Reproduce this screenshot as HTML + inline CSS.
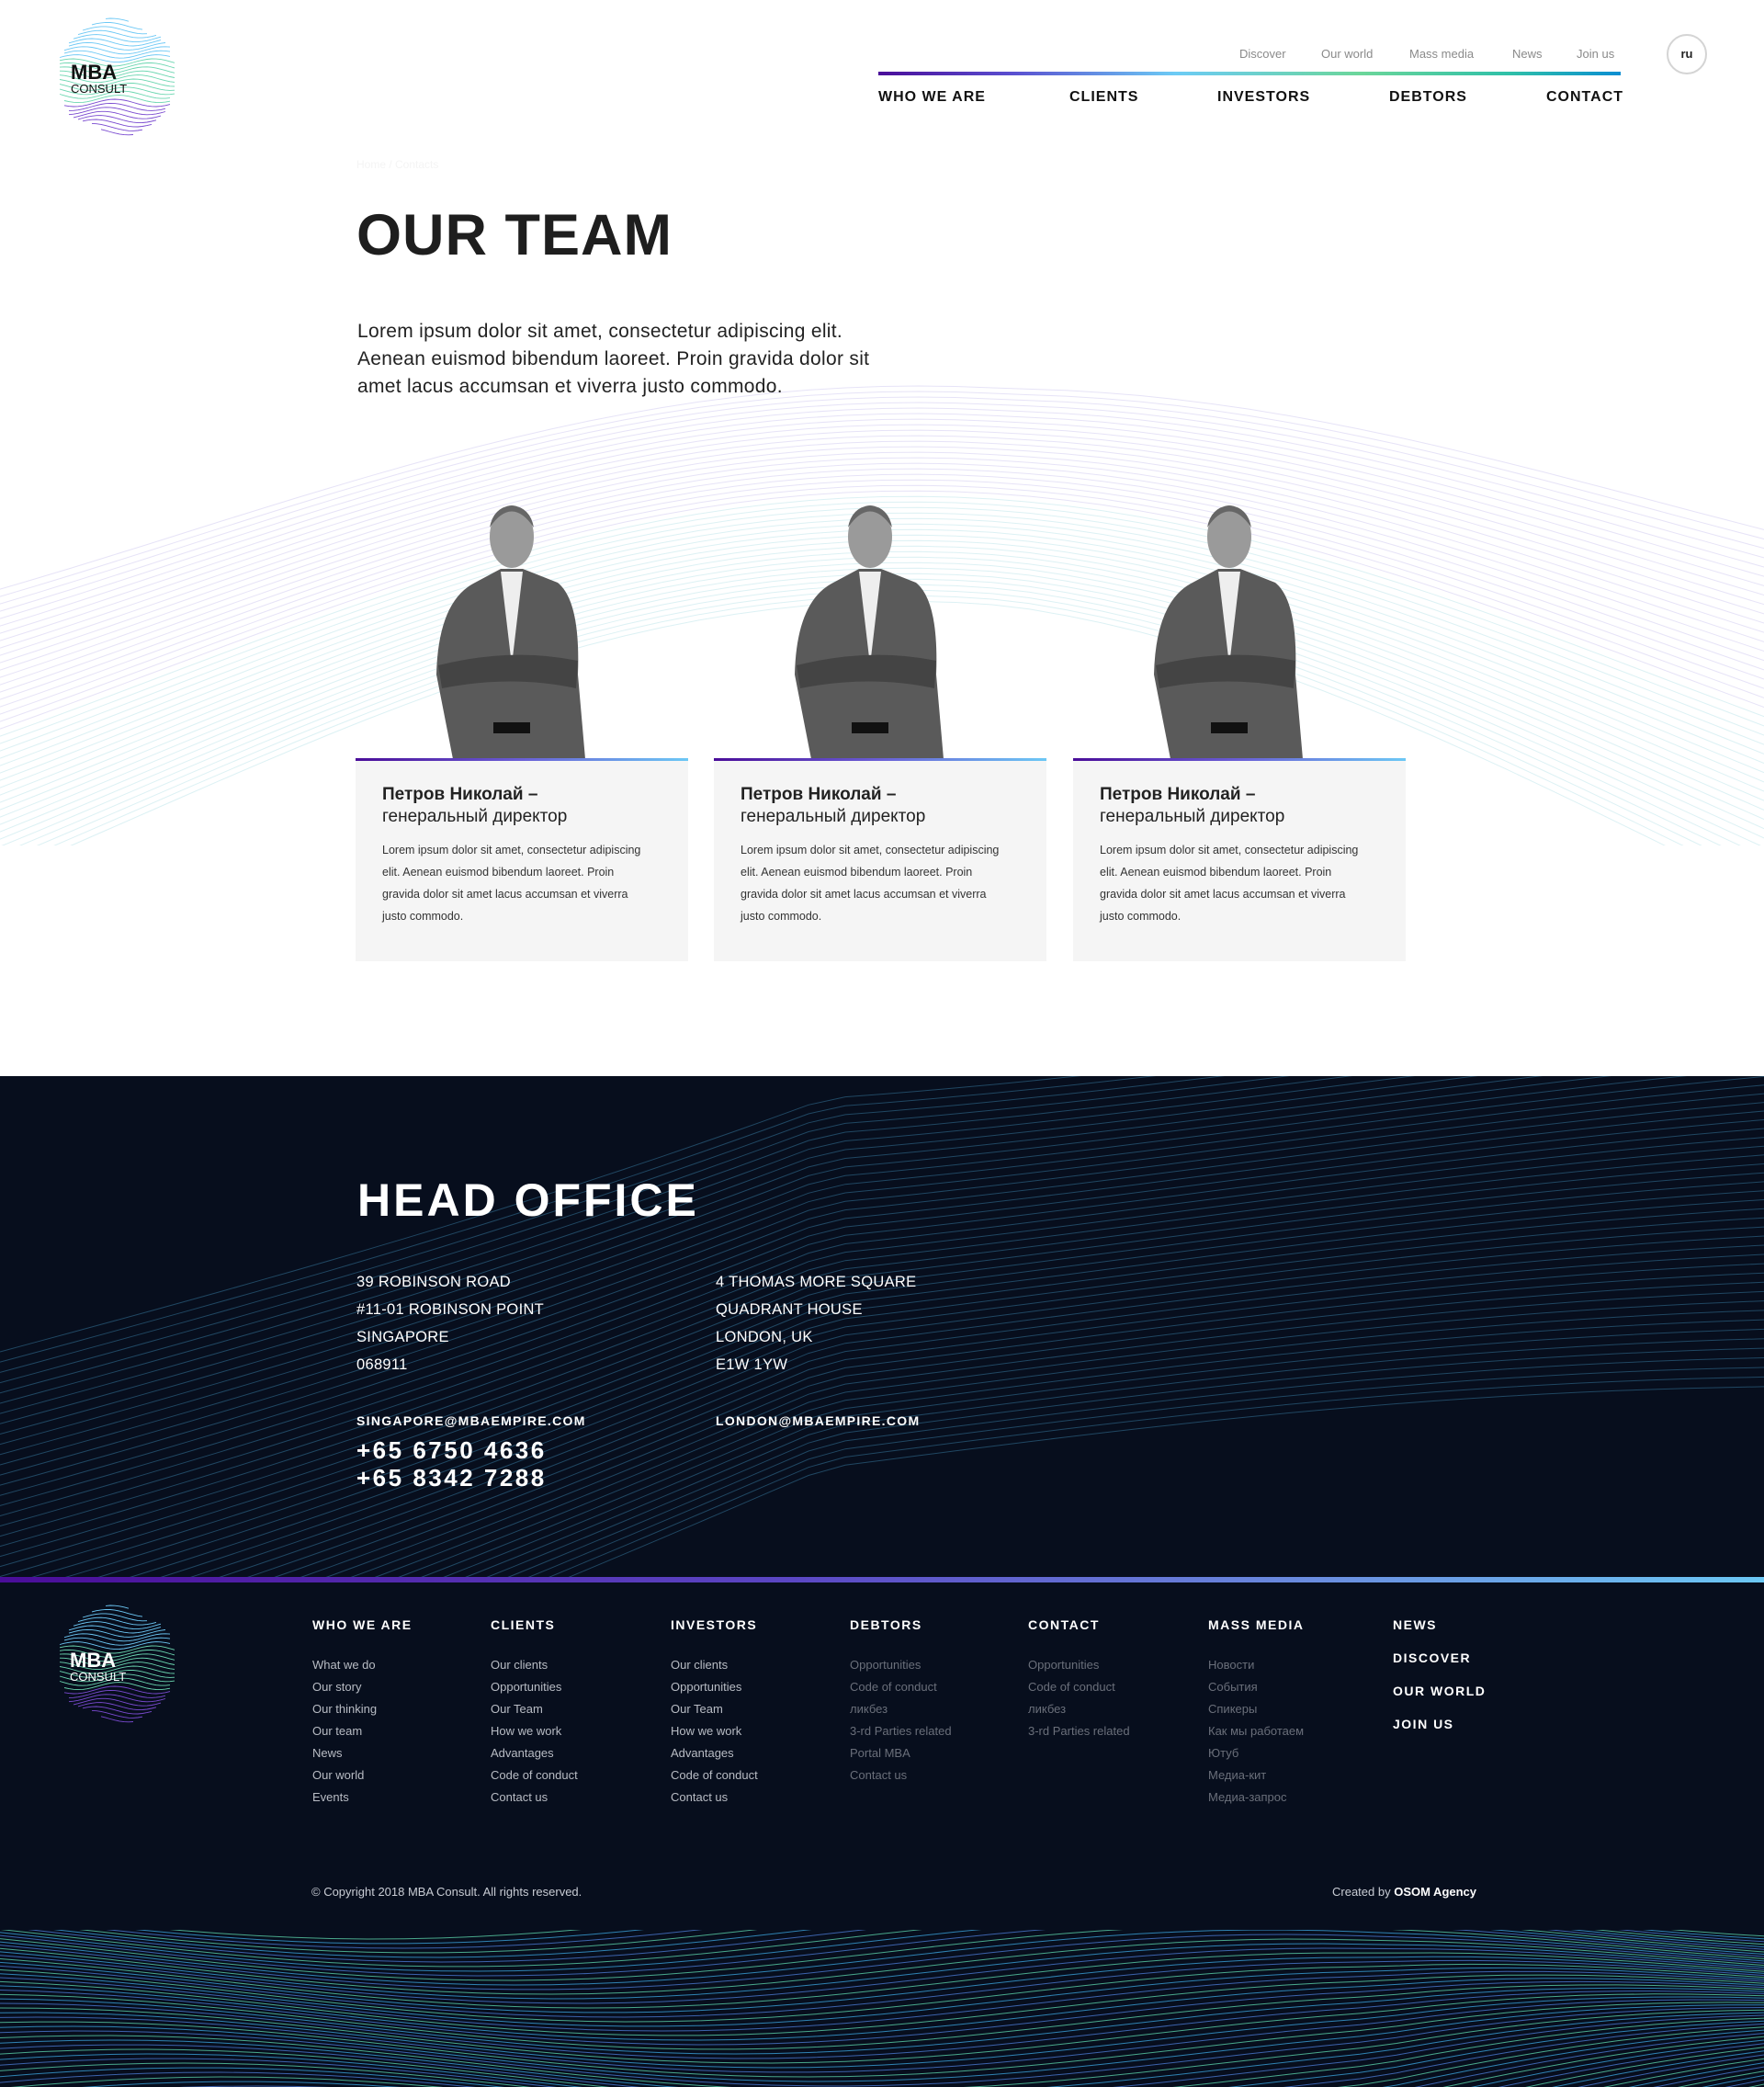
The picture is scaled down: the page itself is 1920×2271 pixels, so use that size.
<!DOCTYPE html>
<html><head><meta charset="utf-8">
<style>
*{margin:0;padding:0;box-sizing:border-box}
html,body{overflow:hidden}
body{width:1920px;height:2271px;position:relative;background:#fff;font-family:"Liberation Sans","DejaVu Sans",sans-serif;color:#1e1e1e}
.a{position:absolute;white-space:nowrap}
.top a{color:#8a8a8a;font-size:13px}
.nav{font-size:16px;font-weight:bold;letter-spacing:1px;color:#111}
.card{position:absolute;top:825px;width:362px;height:221px;background:#f5f5f5}
.card .bar{height:3px;background:linear-gradient(90deg,#4a0d99,#6a5fd6 50%,#6cc8f5)}
.card h3{position:absolute;left:29px;top:28px;font-size:19px;line-height:24px;font-weight:bold;color:#222}
.card h3 span{font-weight:normal}
.card p{position:absolute;left:29px;top:88px;font-size:12.5px;line-height:24px;color:#333;width:282px;white-space:normal}
.dark{position:absolute;left:0;top:1171px;width:1920px;height:1100px;background:#070e1d;overflow:hidden}
.w{color:#fff}
.addr{font-size:16.5px;line-height:30px;color:#fff;letter-spacing:.3px}
.fh{font-size:14px;font-weight:bold;letter-spacing:1.5px;color:#fff}
.fl{font-size:13px;line-height:24px;color:#b8bcc4}
.fl.g{color:#6a6f7a}
</style></head><body>
<svg class="a" style="left:0;top:280px" width="1920" height="640" id="wv1"></svg>
<svg class="a" style="left:55px;top:18px" width="145" height="135" viewBox="0 0 145 135" id="logo1"></svg>
<div class="a" style="left:77px;top:66px;font-size:22px;font-weight:bold;color:#111">MBA</div>
<div class="a" style="left:77px;top:89px;font-size:13px;color:#111">CONSULT</div>

<div class="a top" style="top:50px;left:1349px"><a>Discover</a></div>
<div class="a top" style="top:50px;left:1438px"><a>Our world</a></div>
<div class="a top" style="top:50px;left:1534px"><a>Mass media</a></div>
<div class="a top" style="top:50px;left:1646px"><a>News</a></div>
<div class="a top" style="top:50px;left:1716px"><a>Join us</a></div>
<div class="a" style="left:1814px;top:37px;width:44px;height:44px;border:2px solid #d4d4d4;border-radius:50%;text-align:center;line-height:40px;font-size:13px;font-weight:bold;color:#222">ru</div>
<div class="a" style="left:956px;top:78px;width:808px;height:4px;background:linear-gradient(90deg,#4a0d99,#5a4fd0 18%,#6ccbf5 40%,#6bd69a 65%,#2fc0a8 85%,#0a8ed2)"></div>
<div class="a nav" style="top:97px;left:956px">WHO WE ARE</div>
<div class="a nav" style="top:97px;left:1164px">CLIENTS</div>
<div class="a nav" style="top:97px;left:1325px">INVESTORS</div>
<div class="a nav" style="top:97px;left:1512px">DEBTORS</div>
<div class="a nav" style="top:97px;left:1683px">CONTACT</div>

<div class="a" style="left:388px;top:172px;font-size:12px;color:#f4f4f4">Home / Contacts</div>
<div class="a" style="left:388px;top:220px;font-size:63px;font-weight:bold;color:#1e1e1e;letter-spacing:1px">OUR TEAM</div>
<div class="a" style="left:389px;top:346px;font-size:21px;line-height:30px;color:#222;letter-spacing:.3px">Lorem ipsum dolor sit amet, consectetur adipiscing elit.<br>Aenean euismod bibendum laoreet. Proin gravida dolor sit<br>amet lacus accumsan et viverra justo commodo.</div>

<div id="cards"></div>

<div class="dark">
<svg class="a" style="left:0;top:0" width="1920" height="550" id="wv2"></svg>
<svg class="a" style="left:0;top:929px" width="1920" height="171" id="wv3"></svg>
</div>
<div class="a w" style="left:389px;top:1277px;font-size:50px;font-weight:bold;letter-spacing:3px">HEAD OFFICE</div>
<div class="a addr" style="left:388px;top:1380px">39 ROBINSON ROAD<br>#11-01 ROBINSON POINT<br>SINGAPORE<br>068911</div>
<div class="a addr" style="left:779px;top:1380px">4 THOMAS MORE SQUARE<br>QUADRANT HOUSE<br>LONDON, UK<br>E1W 1YW</div>
<div class="a w" style="left:388px;top:1538px;font-size:14px;font-weight:bold;letter-spacing:1.3px">SINGAPORE@MBAEMPIRE.COM</div>
<div class="a w" style="left:779px;top:1538px;font-size:14px;font-weight:bold;letter-spacing:1.3px">LONDON@MBAEMPIRE.COM</div>
<div class="a w" style="left:388px;top:1563px;font-size:26px;font-weight:bold;line-height:30px;letter-spacing:2.5px">+65 6750 4636<br>+65 8342 7288</div>
<div class="a" style="left:0;top:1716px;width:1920px;height:6px;background:linear-gradient(90deg,#4a0d99,#5b47c4 45%,#6a8ee0 75%,#6cc8f5)"></div>

<svg class="a" style="left:55px;top:1745px" width="145" height="135" viewBox="0 0 145 135" id="logo2"></svg>
<div class="a" style="left:76px;top:1794px;font-size:22px;font-weight:bold;color:#fff">MBA</div>
<div class="a" style="left:76px;top:1817px;font-size:13px;color:#fff">CONSULT</div>

<div id="foot"></div>
<div class="a" style="left:339px;top:2051px;font-size:13px;color:#c8ccd4">© Copyright 2018 MBA Consult. All rights reserved.</div>
<div class="a" style="left:1450px;top:2051px;font-size:13px;color:#c8ccd4">Created by <b style="color:#fff">OSOM Agency</b></div>

<script>
function wave(id,n,f,col,op,w){var s=document.getElementById(id),h='';for(var i=0;i<n;i++){var d='';for(var x=0;x<=1920;x+=40){var y=f(x,i);d+=(x?'L':'M')+x+' '+y.toFixed(1)}h+='<path d="'+d+'" fill="none" stroke="'+col(i)+'" stroke-opacity="'+op+'" stroke-width="'+(w||1)+'"/>'}s.innerHTML=h}
wave('wv1',40,function(x,i){return 300+i*8 - 160*Math.sin((x-200)/1920*Math.PI*1.2)+ (x>1100? (x-1100)*0.05*(i-20)/20:0) - i*2*Math.sin(x/600)},function(i){return i<20?'#b8aee8':'#9bd6e0'},.35);
wave('wv2',45,function(x,i){return -120+i*10 + (x<900? 420 - x*0.35 : 105 - (x-900)*0.05) + 40*Math.sin(x/500+i*0.03)},function(i){return '#3a7fa8'},.5);
wave('wv3',60,function(x,i){return -20+i*5 + 30*Math.sin(x/260 - i*0.06) + (x>1500?-(x-1500)*0.15*(i/60):0)},function(i){return i%3==0?'#5ad0a8':(i%3==1?'#3aa0d8':'#4a78d0')},.8);
function logo(id){var s=document.getElementById(id),h='';for(var i=0;i<28;i++){var y=6+i*4.4;var d='';for(var x=0;x<=145;x+=5){var r=Math.sqrt(Math.max(0,1-Math.pow((y-66)/62,2)));var cx=72,hw=66*r;if(x<cx-hw||x>cx+hw)continue;var yy=y+4*Math.sin(x/14+i*0.3);d+=(d?'L':'M')+x+' '+yy.toFixed(1)}var c=i<10?'#6cc8f5':(i<20?'#6bd6b0':'#7a4ad0');if(d)h+='<path d="'+d+'" fill="none" stroke="'+c+'" stroke-width="0.9"/>'}s.innerHTML=h}
logo('logo1');logo('logo2');
var ch='';[387,777,1168].forEach(function(x){
ch+='<svg class="a" style="left:'+(x+70)+'px;top:534px" width="200" height="292" viewBox="0 0 200 292"><path d="M36 292 L18 200 Q20 120 60 100 L88 85 L112 85 L150 100 Q175 120 172 200 L180 292Z" fill="#5a5a5a"/><path d="M88 88 L100 190 L112 88Z" fill="#eee"/><path d="M20 190 Q100 170 172 185 L170 215 Q100 200 24 215Z" fill="#444"/><rect x="80" y="252" width="40" height="12" fill="#111"/><ellipse cx="100" cy="50" rx="24" ry="34" fill="#9a9a9a"/><path d="M76 40 Q100 5 124 40 Q120 18 100 16 Q80 18 76 40Z" fill="#666"/></svg>';
ch+='<div class="card" style="left:'+x+'px"><div class="bar"></div><h3>Петров Николай –<br><span>генеральный директор</span></h3><p>Lorem ipsum dolor sit amet, consectetur adipiscing elit. Aenean euismod bibendum laoreet. Proin gravida dolor sit amet lacus accumsan et viverra justo commodo.</p></div>'});
document.getElementById('cards').innerHTML=ch;
var cols=[[340,'WHO WE ARE',['What we do','Our story','Our thinking','Our team','News','Our world','Events'],0],[534,'CLIENTS',['Our clients','Opportunities','Our Team','How we work','Advantages','Code of conduct','Contact us'],0],[730,'INVESTORS',['Our clients','Opportunities','Our Team','How we work','Advantages','Code of conduct','Contact us'],0],[925,'DEBTORS',['Opportunities','Code of conduct','ликбез','3-rd Parties related','Portal MBA','Contact us'],1],[1119,'CONTACT',['Opportunities','Code of conduct','ликбез','3-rd Parties related'],1],[1315,'MASS MEDIA',['Новости','События','Спикеры','Как мы работаем','Ютуб','Медиа-кит','Медиа-запрос'],1]];
var f='';cols.forEach(function(c){f+='<div class="a fh" style="left:'+c[0]+'px;top:1760px">'+c[1]+'</div><div class="a fl'+(c[3]?' g':'')+'" style="left:'+c[0]+'px;top:1800px">'+c[2].join('<br>')+'</div>'});
['NEWS','DISCOVER','OUR WORLD','JOIN US'].forEach(function(t,i){f+='<div class="a fh" style="left:1516px;top:'+(1760+i*36)+'px">'+t+'</div>'});
document.getElementById('foot').innerHTML=f;
</script>
</body></html>
